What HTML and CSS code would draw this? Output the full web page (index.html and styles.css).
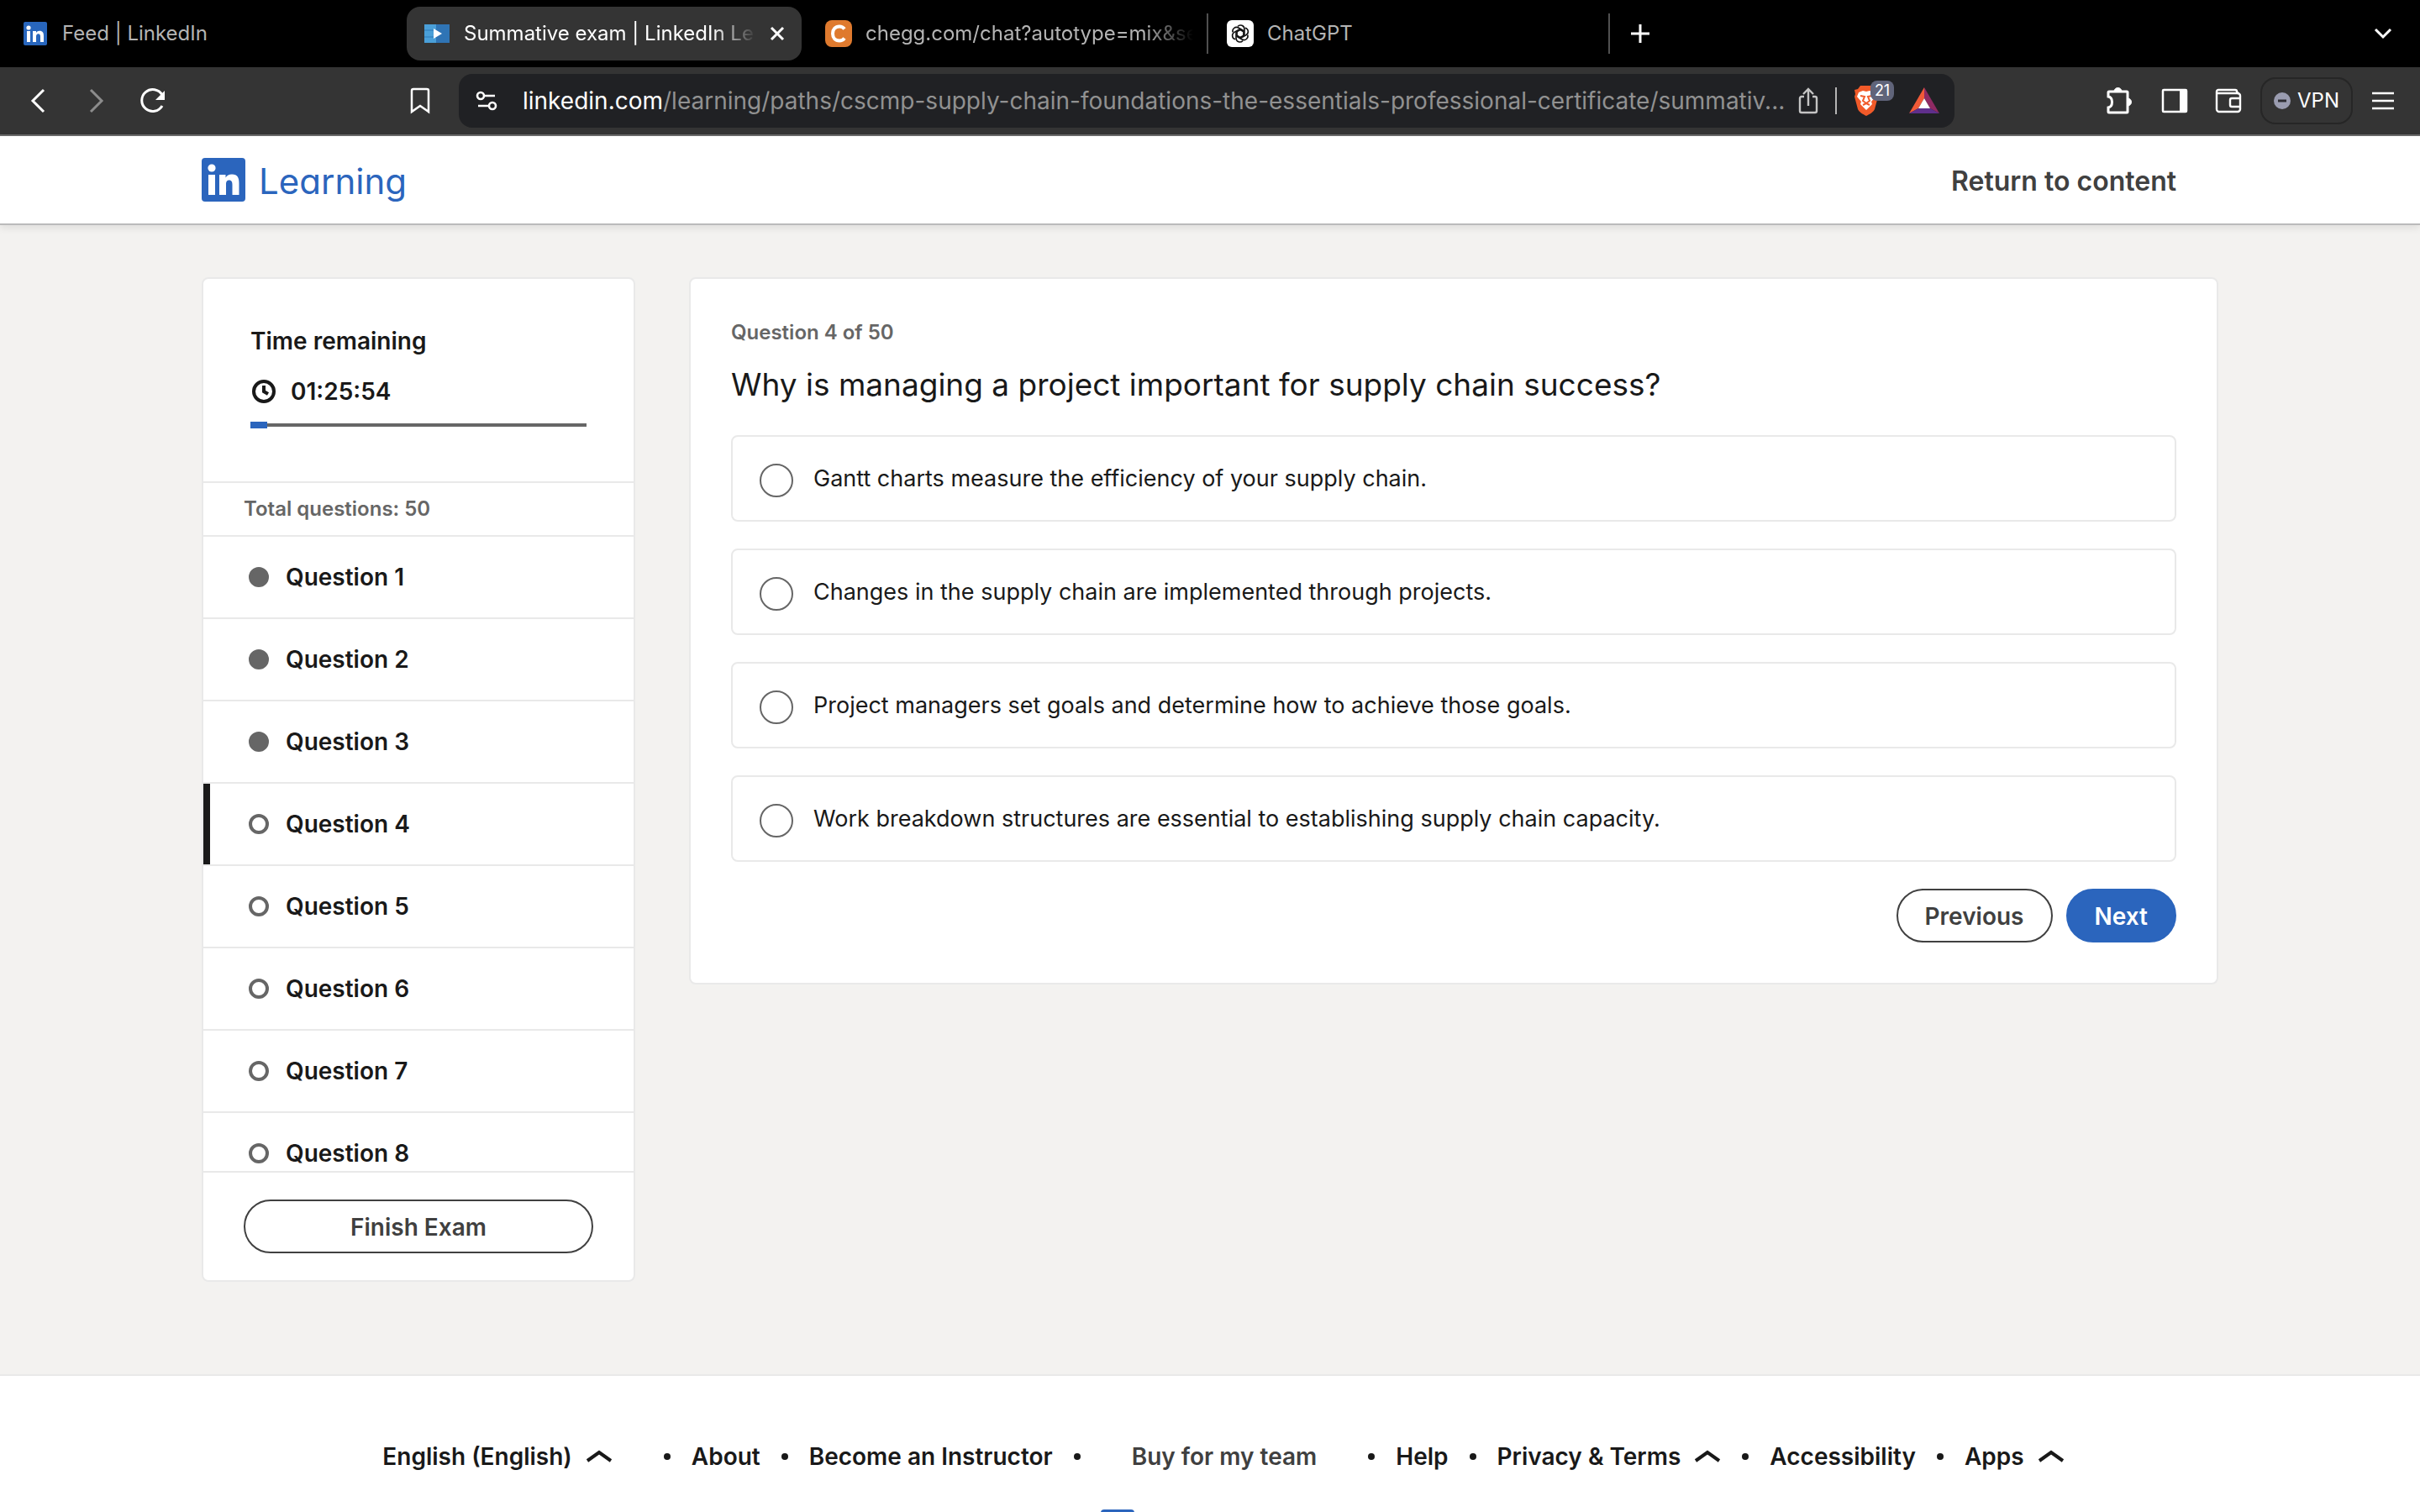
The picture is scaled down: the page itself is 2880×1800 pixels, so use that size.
FILE: index.html
```html
<!DOCTYPE html>
<html lang="en">
<head>
<meta charset="UTF-8">
<title>Summative exam | LinkedIn Learning</title>
<link rel="stylesheet" href="styles.css">
</head>
<body>

<!-- Browser tabs -->
<div class="tabs">
<div class="tab">
<svg class="tab-icon" width="32" height="32" viewBox="0 0 32 32"><rect x="2" y="2" width="28" height="28" rx="2" fill="#2866bd"/><circle cx="8" cy="9" r="2.6" fill="#fff"/><path d="M6 13h4v13H6zM13 13h4v2c1-1.600 2.400-2.300 4-2.300 4 0 5 2.500 5 6V26h-4v-6.500c0-1.800-.500-3.200-2.300-3.200-2 0-2.700 1.400-2.700 3.200V26h-4z" fill="#fff"/></svg>
<span class="tab-title">Feed | LinkedIn</span>
</div>
<div class="tab active">
<svg class="tab-icon" width="32" height="32" viewBox="0 0 32 32"><path d="M1 5h14v22H1z" fill="#4a9fd8"/><path d="M15 5h16v22H15z" fill="#2f74b5"/><path d="M1 12h14M1 20h14" stroke="#3b8cc8" stroke-width="2"/><path d="M12 10l10 6-10 6z" fill="#fff"/></svg>
<span class="tab-title fade">Summative exam | LinkedIn Le</span>
<button class="close" aria-label="Close tab"><svg width="18" height="18" viewBox="0 0 18 18"><path d="M2 2l14 14M16 2L2 16" stroke="#fff" stroke-width="3"/></svg></button>
</div>
<div class="tab">
<svg class="tab-icon" width="32" height="32" viewBox="0 0 32 32"><rect width="32" height="32" rx="8" fill="#df7a2e"/><path d="M23 10.500c-1.500-2-3.500-3-6-3-5 0-8 3.500-8 8.500s3 8.500 8 8.500c2.500 0 4.500-1 6-3" fill="none" stroke="#fff" stroke-width="4"/></svg>
<span class="tab-title fade">chegg.com/chat?autotype=mix&amp;se</span>
</div>
<div class="tab divided">
<svg class="tab-icon" width="32" height="32" viewBox="0 0 32 32"><rect width="32" height="32" rx="6" fill="#fff"/><g fill="none" stroke="#111" stroke-width="1.600"><g id="petal"><path d="M16 11.500l-5 2.900v6.500c0 5 5.500 6.500 8 3.500"/></g><use href="#petal" transform="rotate(60 16 16)"/><use href="#petal" transform="rotate(120 16 16)"/><use href="#petal" transform="rotate(180 16 16)"/><use href="#petal" transform="rotate(240 16 16)"/><use href="#petal" transform="rotate(300 16 16)"/></g></svg>
<span class="tab-title">ChatGPT</span>
</div>
<button class="new-tab" aria-label="New tab"><svg width="22" height="22" viewBox="0 0 22 22"><path d="M11 0v22M0 11h22" stroke="#fff" stroke-width="3"/></svg></button>
<button class="tab-list" aria-label="Search tabs"><svg width="22" height="14" viewBox="0 0 22 14"><path d="M2 2l9 9 9-9" fill="none" stroke="#fff" stroke-width="3"/></svg></button>
</div>

<!-- Toolbar -->
<div class="toolbar">
<div class="nav-buttons">
<button aria-label="Back"><svg width="36" height="36" viewBox="0 0 36 36"><path d="M24 5L11 18l13 13" fill="none" stroke="#fff" stroke-width="3"/></svg></button>
<button aria-label="Forward"><svg width="36" height="36" viewBox="0 0 36 36"><path d="M12 5l13 13-13 13" fill="none" stroke="#8c8c8c" stroke-width="3"/></svg></button>
<button aria-label="Reload"><svg width="36" height="36" viewBox="0 0 36 36"><path d="M29 24a13 13 0 1 1 0-13" fill="none" stroke="#fff" stroke-width="3"/><path d="M32 6v11H21l4-4z" fill="#fff"/></svg></button>
</div>
<button class="bookmark" aria-label="Bookmark"><svg width="24" height="32" viewBox="0 0 24 32"><path d="M2 4a2 2 0 0 1 2-2h16a2 2 0 0 1 2 2v25l-10-7-10 7z" fill="none" stroke="#fff" stroke-width="2.500"/></svg></button>
<div class="address">
<svg width="26" height="26" viewBox="0 0 26 26" fill="none" stroke="#fff" stroke-width="2.600"><circle cx="6" cy="7" r="4"/><path d="M11 7h12M3 19h12"/><circle cx="20" cy="19" r="4"/></svg>
<span class="url"><b>linkedin.com</b>/learning/paths/cscmp-supply-chain-foundations-the-essentials-professional-certificate/summativ...</span>
<button aria-label="Share"><svg width="24" height="34" viewBox="0 0 24 34" fill="none" stroke="#c4c4c4" stroke-width="2.400"><path d="M7 12H4a2 2 0 0 0-2 2v15a2 2 0 0 0 2 2h16a2 2 0 0 0 2-2V14a2 2 0 0 0-2-2h-3M12 23V4M6 9l6-6 6 6"/></svg></button>
<span class="address-divider"></span>
<button class="shield" aria-label="Shields"><svg width="30" height="36" viewBox="0 0 30 36"><path d="M8 0h14l3 4 4 0-1 6 1 3-4 15c-1 3-6 6-10 8-4-2-9-5-10-8L1 13l1-3-1-5 4-1z" fill="#f15a29"/><path d="M6 8l5-2 4 1 4-1 5 2 2 5-5 6 1 3-7 7-7-7 1-3-5-6z" fill="#fff"/><path d="M8 12l5 1-2 5 4 3 4-3-2-5 5-1M11 23l4-2 4 2" fill="none" stroke="#f15a29" stroke-width="2"/></svg><span class="badge">21</span></button>
<button aria-label="Rewards"><svg width="36" height="32" viewBox="0 0 36 32"><path d="M18 0L0 31l11-6 7-12z" fill="#f15a38"/><path d="M18 0l18 31-11-6-7-12z" fill="#8f2a63"/><path d="M0 31l11-6h14l11 6z" fill="#5f2f8c"/><path d="M18 13l7 12H11z" fill="#fff"/></svg></button>
</div>
<div class="tools">
<button aria-label="Extensions"><svg width="34" height="34" viewBox="0 0 34 34"><path d="M3 12V7a1 1 0 0 1 1-1h21a1 1 0 0 1 1 1v23a1 1 0 0 1-1 1H4a1 1 0 0 1-1-1v-5c6-1 6-12 0-13z" fill="none" stroke="#fff" stroke-width="3"/><path d="M10 6a4 4 0 0 1 9 0zM26 14a4 4 0 0 1 0 9z" fill="#fff" stroke="#fff"/></svg></button>
<button aria-label="Sidebar"><svg width="32" height="30" viewBox="0 0 32 30"><rect x="2" y="2" width="28" height="26" rx="1" fill="none" stroke="#fff" stroke-width="2.500"/><path d="M22 2h8v26h-8z" fill="#fff"/></svg></button>
<button aria-label="Wallet"><svg width="32" height="30" viewBox="0 0 32 30" fill="none" stroke="#fff" stroke-width="2.400"><path d="M2 7V4a2 2 0 0 1 2-2h20a2 2 0 0 1 2 2l2 3M2 6h25a3 3 0 0 1 3 3v16a3 3 0 0 1-3 3H5a3 3 0 0 1-3-3zM30 12H20a2 2 0 0 0-2 2v6a2 2 0 0 0 2 2h10"/></svg></button>
<button class="vpn"><svg width="20" height="20" viewBox="0 0 20 20"><circle cx="10" cy="10" r="10" fill="#9a9cb0"/><path d="M5 10h10" stroke="#2d2d33" stroke-width="3"/></svg>VPN</button>
<button aria-label="Menu"><svg width="28" height="24" viewBox="0 0 28 24"><path d="M1 3h26M1 12h26M1 21h26" stroke="#fff" stroke-width="2.400"/></svg></button>
</div>
</div>

<!-- Site header -->
<header class="site-header">
<a class="brand" href="#">
<svg width="52" height="52" viewBox="0 0 52 52"><rect width="52" height="52" rx="4" fill="#2b65bd"/><circle cx="12" cy="12" r="4.600" fill="#fff"/><path d="M8 20h8v24H8zM21 20h7.500v3.500c1.500-2.700 4-4.100 7.500-4.100 7 0 8.500 4.600 8.500 11V44h-8V32c0-3.300-.800-5.600-3.800-5.600S29 28.500 29 32v12h-8z" fill="#fff"/></svg>
<span>Learning</span>
</a>
<a class="return" href="#">Return to content</a>
</header>

<main class="exam">
<aside class="card sidebar">
<div class="timer">
<div class="timer-title">Time remaining</div>
<div class="timer-value">
<svg width="32" height="32" viewBox="0 0 32 32"><circle cx="16" cy="16" r="12" fill="none" stroke="#191919" stroke-width="4"/><path d="M16 9v7l5 3" fill="none" stroke="#191919" stroke-width="4"/></svg>
01:25:54
</div>
<div class="progress"><div class="progress-done" style="width: 5%"></div></div>
</div>
<div class="total">Total questions: 50</div>
<ul class="questions">
<li><a class="done" href="#">Question 1</a></li>
<li><a class="done" href="#">Question 2</a></li>
<li><a class="done" href="#">Question 3</a></li>
<li><a class="current" href="#">Question 4</a></li>
<li><a href="#">Question 5</a></li>
<li><a href="#">Question 6</a></li>
<li><a href="#">Question 7</a></li>
<li><a href="#">Question 8</a></li>
</ul>
<div class="finish">
<button class="btn">Finish Exam</button>
</div>
</aside>

<form class="card question">
<div class="count">Question 4 of 50</div>
<h1>Why is managing a project important for supply chain success?</h1>
<div class="options">
<label><input type="radio" name="answer" value="1">Gantt charts measure the efficiency of your supply chain.</label>
<label><input type="radio" name="answer" value="2">Changes in the supply chain are implemented through projects.</label>
<label><input type="radio" name="answer" value="3">Project managers set goals and determine how to achieve those goals.</label>
<label><input type="radio" name="answer" value="4">Work breakdown structures are essential to establishing supply chain capacity.</label>
</div>
<div class="actions">
<button type="button" class="btn">Previous</button>
<button type="button" class="btn primary">Next</button>
</div>
</form>
</main>

<footer class="site-footer">
<ul class="footer-links">
<li class="wide"><button>English (English)<svg width="32" height="16" viewBox="0 0 32 16"><path d="M2 13L16 3l14 10" fill="none" stroke="#191919" stroke-width="4"/></svg></button></li>
<li><a href="#">About</a></li>
<li><a href="#">Become an Instructor</a></li>
<li class="team"><a href="#">Buy for my team</a></li>
<li><a href="#">Help</a></li>
<li><button>Privacy &amp; Terms<svg width="32" height="16" viewBox="0 0 32 16"><path d="M2 13L16 3l14 10" fill="none" stroke="#191919" stroke-width="4"/></svg></button></li>
<li><a href="#">Accessibility</a></li>
<li><button>Apps<svg width="32" height="16" viewBox="0 0 32 16"><path d="M2 13L16 3l14 10" fill="none" stroke="#191919" stroke-width="4"/></svg></button></li>
</ul>
<div class="footer-logo"></div>
</footer>

</body>
</html>
```
FILE: styles.css
```css
*, *::before, *::after { box-sizing: border-box; }
body { margin: 0; height: 100vh; overflow: hidden; display: flex; flex-direction: column; background-color: #f3f2f0; color: #191919; font-family: Inter, "Liberation Sans", sans-serif; font-size: 28px; line-height: 40px; }
a { color: inherit; text-decoration: none; }
ul { list-style: none; margin: 0; padding: 0; }
button { font: inherit; color: inherit; background: none; border: none; padding: 0; }
svg { display: block; flex-shrink: 0; }

/* Tabs */
.tabs { display: flex; align-items: center; height: 80px; flex-shrink: 0; background-color: #000; color: #b4b4b4; font-size: 24px; }
.tab { display: flex; align-items: center; gap: 16px; width: 470px; height: 64px; margin-left: 8px; padding: 0 12px 0 20px; border-radius: 16px; position: relative; }
.tab:first-child { margin-left: 6px; }
.tab.active { background-color: #343434; color: #fff; }
.tab .close { margin-right: 8px; }
.tab-title { flex: 1; min-width: 0; overflow: hidden; white-space: nowrap; }
.tab-title.fade { -webkit-mask-image: linear-gradient(to right, #000 85%, transparent); mask-image: linear-gradient(to right, #000 85%, transparent); }
.tab.divided::before, .tab.divided::after { content: ""; position: absolute; top: 8px; bottom: 8px; left: -4px; width: 2px; background-color: #505050; }
.tab.divided::after { left: auto; right: -6px; }
.new-tab { margin-left: 31px; }
.tab-list { margin-left: auto; margin-right: 33px; }

/* Toolbar */
.toolbar { display: flex; align-items: center; height: 82px; flex-shrink: 0; background-color: #343434; border-bottom: 2px solid #6a6a6a; }
.nav-buttons { display: flex; gap: 32px; margin-left: 28px; }
.bookmark { margin-left: 288px; }
.address { display: flex; align-items: center; gap: 20px; flex: 1; min-width: 0; height: 64px; margin-left: 34px; padding: 0 18px 0 20px; border-radius: 16px; background-color: #202124; }
.url { flex: 1; min-width: 0; margin-left: 10px; margin-right: -16px; overflow: hidden; white-space: nowrap; color: #919191; }
.url b { font-weight: 400; color: #fff; }
.address-divider { width: 2px; height: 32px; background-color: #b4b4b4; }
.shield { position: relative; margin-right: 16px; }
.badge { position: absolute; left: 20px; top: -6px; width: 28px; height: 24px; border-radius: 8px; background-color: #60647a; color: #fff; font-size: 18px; line-height: 24px; text-align: center; }
.tools { display: flex; align-items: center; gap: 32px; margin-left: 180px; margin-right: 30px; }
.vpn { display: flex; align-items: center; gap: 8px; height: 56px; margin: 0 -10px; padding: 0 14px; border: 2px solid #262626; border-radius: 18px; color: #fff; font-size: 24px; }

/* Site header */
.site-header { display: flex; align-items: center; justify-content: space-between; height: 106px; flex-shrink: 0; padding: 0 290px 0 240px; background-color: #fff; border-bottom: 2px solid #bbb; box-shadow: 0 4px 8px rgba(0, 0, 0, 0.08); }
.brand { display: flex; align-items: center; gap: 16px; color: #2b65bd; font-size: 42px; font-feature-settings: "cv11"; }
.brand span, .return { padding-top: 4px; }
.return { color: #404040; font-size: 32px; font-weight: 600; }

/* Exam */
.exam { display: flex; align-items: flex-start; gap: 64px; margin: 62px 240px 110px; }
.card { background-color: #fff; border: 2px solid #e9e9e9; border-radius: 8px; }
.btn { height: 64px; padding: 2px 32px 0; border: 2px solid #404040; border-radius: 32px; color: #404040; font-weight: 600; }
.btn.primary { background-color: #2b65bd; border-color: #2b65bd; color: #fff; }

.sidebar { width: 516px; flex-shrink: 0; }
.timer { padding: 54px 56px 63px; font-weight: 600; }
.timer-value { display: flex; align-items: center; gap: 16px; margin-top: 20px; margin-bottom: 16px; }
.progress { display: flex; align-items: center; height: 8px; background: linear-gradient(#666, #666) center / 100% 4px no-repeat; }
.progress-done { height: 8px; background-color: #2b65bd; }
.total { padding: 11px 48px; border-top: 2px solid #e9e9e9; color: #666; font-size: 24px; font-weight: 600; }
.questions { height: 757px; overflow: hidden; }
.questions a { display: flex; align-items: center; gap: 20px; height: 98px; padding-left: 54px; border-top: 2px solid #e9e9e9; font-weight: 600; position: relative; }
.questions a::before { content: ""; width: 24px; height: 24px; border: 4px solid #666; border-radius: 50%; }
.questions a.done::before { background-color: #666; }
.questions a.current::after { content: ""; position: absolute; left: 0; top: 0; bottom: 0; width: 8px; background-color: #191919; }
.finish { padding: 32px 48px; border-top: 2px solid #e9e9e9; }
.finish .btn { width: 100%; }

.question { flex: 1; padding: 44px 48px 48px; }
.count { color: #666; font-size: 24px; font-weight: 600; }
h1 { margin: 16px 0 34px; font-size: 37px; font-weight: 400; line-height: 52px; }
.options { display: flex; flex-direction: column; gap: 32px; font-size: 27px; }
.options label { display: flex; align-items: center; gap: 24px; height: 103px; padding: 0 32px; border: 2px solid #e9e9e9; border-radius: 8px; }
.options input { appearance: none; width: 40px; height: 40px; margin: 4px 0 0; border: 2px solid #666; border-radius: 50%; }
.actions { display: flex; justify-content: flex-end; gap: 16px; margin-top: 32px; }

/* Footer */
.site-footer { flex: 1 0 auto; padding-top: 76px; background-color: #fff; border-top: 2px solid #e9e9e9; font-weight: 600; }
.footer-links { display: flex; justify-content: center; padding-left: 32px; }
.footer-links li { display: flex; align-items: center; white-space: nowrap; }
.footer-links li + li::before { content: ""; width: 8px; height: 8px; margin: 0 25px; border-radius: 50%; background-color: #191919; }
.footer-links button { display: flex; align-items: center; gap: 16px; }
.footer-links .wide { margin-right: 36px; }
.footer-links .team { color: #404040; margin-right: 36px; }
.footer-links .team a { margin-left: 36px; }
.footer-logo { width: 40px; height: 40px; margin: 43px 0 0 calc(50% - 130px); border-radius: 4px; background-color: #2b65bd; }
```
